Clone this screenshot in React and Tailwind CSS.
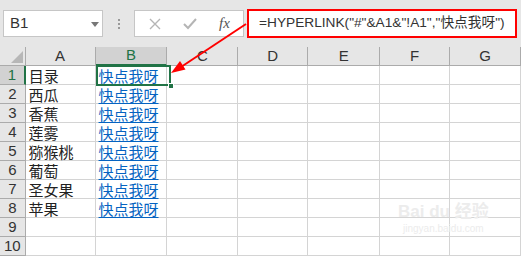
import React from 'react';

const cols = [
  { key: 'A', w: 'w-[71px]' },
  { key: 'B', w: 'w-[73px]' },
  { key: 'C', w: 'w-[72px]' },
  { key: 'D', w: 'w-[71px]' },
  { key: 'E', w: 'w-[73px]' },
  { key: 'F', w: 'w-[71px]' },
  { key: 'G', w: 'w-[72px]' },
];

const names = ['目录', '西瓜', '香蕉', '莲雾', '猕猴桃', '葡萄', '圣女果', '苹果', '', ''];

const latin = { fontFamily: '"Liberation Sans", "Noto Sans CJK SC", sans-serif' };
const cjk = { fontFamily: '"Noto Sans CJK SC", "Liberation Sans", sans-serif' };

const Toolbar = () => (
  <div className="flex items-start h-[47px] pt-[10px] pl-[3px]">
    <div className="relative w-[100px] h-[27px] bg-white border border-[#c6c6c6] flex items-center pl-[6px]">
      <span className="text-[15px] text-[#333]" style={latin}>B1</span>
      <div className="absolute left-[87px] top-[11px] w-0 h-0 border-l-[4px] border-r-[4px] border-t-[5px] border-l-transparent border-r-transparent border-t-[#777]" />
    </div>
    <div className="w-[31px] h-[27px] flex flex-col items-center justify-center gap-[2px]">
      <span className="block w-[2px] h-[2px] bg-[#999]" />
      <span className="block w-[2px] h-[2px] bg-[#999]" />
      <span className="block w-[2px] h-[2px] bg-[#999]" />
    </div>
    <div className="w-[110px] h-[27px] bg-white border border-[#c6c6c6] flex items-center">
      <svg width="12" height="12" viewBox="0 0 12 12" className="ml-[14px]">
        <path d="M1 1 L11 11 M11 1 L1 11" stroke="#b5b5b5" strokeWidth="1.4" fill="none" />
      </svg>
      <svg width="14" height="12" viewBox="0 0 14 12" className="ml-[22px]">
        <path d="M1 6 L5 10 L13 1" stroke="#b5b5b5" strokeWidth="2" fill="none" />
      </svg>
      <span className="ml-[22px] text-[15px] italic text-[#555]" style={{ fontFamily: '"Liberation Serif", serif' }}>
        fx
      </span>
    </div>
    <div className="ml-[3px] mt-[-1px] w-[270px] h-[29px] bg-white border-2 border-[#ff0000] flex items-center pl-[10px]">
      <span className="text-[13.7px] text-[#333] whitespace-nowrap" style={latin}>
        =HYPERLINK("#"&amp;A1&amp;"!A1","快点我呀")
      </span>
    </div>
  </div>
);

const HeaderRow = () => (
  <div className="flex h-[19px]">
    <div className="relative w-[26px] h-[19px] border-r border-b border-[#ababab]">
      <svg width="12" height="12" viewBox="0 0 12 12" className="absolute right-[2px] bottom-[2px]">
        <path d="M12 0 L12 12 L0 12 Z" fill="#b7b7b7" />
      </svg>
    </div>
    {cols.map((c) =>
      c.key === 'B' ? (
        <div
          key={c.key}
          className={`${c.w} h-[19px] bg-[#d2d2d2] border-r border-[#ababab] border-b-2 border-b-[#217346] flex items-center justify-center text-[15px] text-[#217346]`}
          style={latin}
        >
          {c.key}
        </div>
      ) : (
        <div
          key={c.key}
          className={`${c.w} h-[19px] border-r border-b border-[#ababab] flex items-center justify-center text-[15px] text-[#333]`}
          style={latin}
        >
          {c.key}
        </div>
      )
    )}
  </div>
);

const Row = ({ n, name }) => (
  <div className="flex h-[19px]">
    {n === 1 ? (
      <div className="w-[26px] h-[19px] bg-[#d2d2d2] border-r-2 border-r-[#217346] border-b border-b-[#ababab] flex items-center justify-center text-[15px] text-[#217346]" style={latin}>
        {n}
      </div>
    ) : (
      <div className="w-[26px] h-[19px] border-r border-b border-[#ababab] flex items-center justify-center text-[15px] text-[#333]" style={latin}>
        {n}
      </div>
    )}
    {cols.map((c) => (
      <div key={c.key} className={`${c.w} h-[19px] bg-white border-r border-b border-[#d4d4d4] flex items-center overflow-visible whitespace-nowrap`}>
        {c.key === 'A' && name && (
          <span className="pl-[3px] text-[15px] leading-none text-[#222]" style={cjk}>{name}</span>
        )}
        {c.key === 'B' && n <= 8 && (
          <span className="pl-[3px] text-[15px] leading-none text-[#0563c1] underline underline-offset-2" style={cjk}>快点我呀</span>
        )}
      </div>
    ))}
  </div>
);

export default function App() {
  return (
    <div className="relative w-[521px] h-[256px] overflow-hidden bg-[#e6e6e6]">
      <Toolbar />
      <HeaderRow />
      {names.map((name, i) => (
        <Row key={i} n={i + 1} name={name} />
      ))}

      {/* selection box on B1 */}
      <div className="absolute left-[96px] top-[65px] w-[75px] h-[21px] border-2 border-[#217346]" />
      <div className="absolute left-[168px] top-[83px] w-[6px] h-[6px] bg-[#217346] border border-white" />

      {/* watermark */}
      <div className="absolute left-[398px] top-[203px] flex flex-col items-center text-[#ececec]">
        <span className="text-[17px] font-bold leading-none" style={latin}>Bai du 经验</span>
        <span className="text-[10px] leading-none mt-[4px]" style={latin}>jingyan.baidu.com</span>
      </div>

      {/* red arrow */}
      <svg className="absolute left-0 top-0" width="521" height="256" viewBox="0 0 521 256">
        <line x1="246" y1="24" x2="181" y2="67" stroke="#ff0000" strokeWidth="2" />
        <polygon points="171,73 185.5,69.5 180,61" fill="#ff0000" />
      </svg>
    </div>
  );
}
